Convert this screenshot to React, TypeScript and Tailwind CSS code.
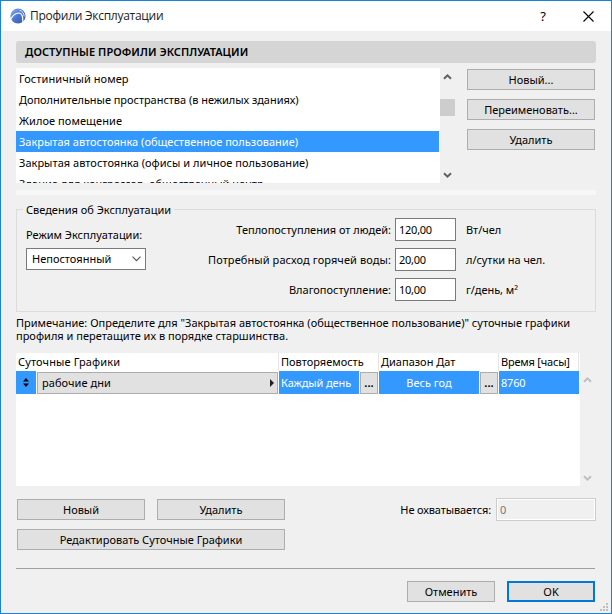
import React, { useState } from 'react';
import clsx from 'clsx';

const profiles = [
  { name: 'Гостиничный номер', spacing: 'tracking-[0.07px]' },
  { name: 'Дополнительные пространства (в нежилых зданиях)', spacing: 'tracking-[-0.04px]' },
  { name: 'Жилое помещение', spacing: 'tracking-[0.07px]' },
  { name: 'Закрытая автостоянка (общественное пользование)', spacing: 'tracking-normal' },
  { name: 'Закрытая автостоянка (офисы и личное пользование)', spacing: 'tracking-[0.03px]' },
  { name: 'Здание для конгрессов, общественный центр', spacing: 'tracking-normal' },
];

const gains = [
  { label: 'Теплопоступления от людей:', spacing: 'tracking-normal', value: '120,00', unit: 'Вт/чел' },
  { label: 'Потребный расход горячей воды:', spacing: 'tracking-[0.09px]', value: '20,00', unit: 'л/сутки на чел.' },
  { label: 'Влагопоступление:', spacing: 'tracking-normal', value: '10,00', unit: 'г/день, м²' },
];

const Button = ({ className, children }: { className?: string; children: React.ReactNode }) => (
  <button
    type="button"
    className={clsx(
      'flex h-[21px] shrink-0 items-center justify-center border bg-[#e1e1e1] whitespace-nowrap',
      className ?? 'w-32 border-[#adadad]',
    )}
  >
    {children}
  </button>
);

const Arrow = ({ down = false, color }: { down?: boolean; color: string }) => (
  <svg width="9" height="7" viewBox="0 0 9 7" fill="none" stroke={color} strokeWidth="2">
    <path d={down ? 'M1 1.2 4.5 4.7 8 1.2' : 'M1 5.8 4.5 2.3 8 5.8'} />
  </svg>
);

const Logo = () => (
  <svg width="16" height="16" viewBox="0 0 16 16">
    <defs>
      <linearGradient id="logo" x1="0" y1="0" x2="1" y2="1">
        <stop offset="0" stopColor="#8db2f2" />
        <stop offset="0.5" stopColor="#4a76d0" />
        <stop offset="1" stopColor="#3456ac" />
      </linearGradient>
    </defs>
    <circle cx="8" cy="8" r="7.6" fill="url(#logo)" />
    <path d="M.2 12C2.6 7.4 5 5 8.6 5 12.3 5 13 9 12.8 14.8" fill="none" stroke="#fff" strokeWidth="1.2" />
    <path d="M9.5 2.3C12.6 3 14 5.4 14.1 8.5" fill="none" stroke="#e8effc" strokeWidth="1" />
  </svg>
);

const TitleBar = () => (
  <div className="flex h-[30px] shrink-0 items-center bg-white pl-[9px] text-[#222]">
    <Logo />
    <span className="ml-[4px] font-['Open_Sans','Noto_Sans',sans-serif] text-[12px] tracking-[-0.27px]">
      Профили Эксплуатации
    </span>
    <span className="ml-auto w-2 text-center text-[13px] text-black">?</span>
    <svg className="mr-[17px] ml-[36px]" width="11" height="11" viewBox="0 0 11 11" stroke="#000" strokeWidth="1.1">
      <path d="M.5.5l10 10M10.5.5l-10 10" />
    </svg>
  </div>
);

export default function App() {
  const [selected, setSelected] = useState(3);

  return (
    <div className="flex h-[614px] w-[612px] flex-col overflow-hidden border border-[#1883d7] bg-[#f0f0f0] font-['Noto_Sans',sans-serif] text-[11px] leading-4 text-black">
      <TitleBar />

      <div className="relative flex grow flex-col px-[15px] pt-[10px]">
        <div className="flex h-[22px] shrink-0 items-center rounded-[3px] bg-[#d5d5d5] pl-[9px] font-semibold tracking-[0.05px]">
          ДОСТУПНЫЕ ПРОФИЛИ ЭКСПЛУАТАЦИИ
        </div>

        {/* Profiles */}
        <div className="mt-[5px] flex h-[115px] shrink-0">
          <div className="w-[424px] overflow-hidden bg-white pr-px">
            {profiles.map((profile, index) => (
              <div
                key={profile.name}
                onClick={() => setSelected(index)}
                className={clsx(
                  'flex h-[21px] items-center pt-px pl-[3px] whitespace-nowrap',
                  index === selected && 'bg-[#3399ff] text-white',
                )}
              >
                <span className={profile.spacing}>{profile.name}</span>
              </div>
            ))}
          </div>
          <div className="flex w-[15px] flex-col items-center pt-[5px] pb-[4px]">
            <Arrow color="#606060" />
            <div className="mt-[19px] h-[17px] w-[15px] shrink-0 bg-[#cdcdcd]" />
            <div className="mt-auto">
              <Arrow down color="#606060" />
            </div>
          </div>
          <div className="ml-[12px] flex flex-col gap-[9px] pt-px">
            <Button>Новый...</Button>
            <Button>Переименовать...</Button>
            <Button>Удалить</Button>
          </div>
        </div>

        <div className="mt-[7px] h-[5px] shrink-0 bg-[#f7f7f7]" />

        {/* Details */}
        <div className="mt-[14px] flex h-[103px] shrink-0 border border-[#dcdcdc]">
          <div className="w-[185px] pl-[6px]">
            <div className="-mt-[8px] w-fit bg-[#f0f0f0] px-[3px] whitespace-nowrap">Сведения об Эксплуатации</div>
            <div className="mt-[9px] pl-[3px] whitespace-nowrap">Режим Эксплуатации:</div>
            <div className="mt-[5px] ml-[3px] flex h-[22px] w-[120px] items-center justify-between border border-[#7a7a7a] bg-white pr-[4px] pl-[5px]">
              <span>Непостоянный</span>
              <svg width="9" height="6" viewBox="0 0 9 6" fill="none" stroke="#555" strokeWidth="1.1">
                <path d="M.5.7l4 4 4-4" />
              </svg>
            </div>
          </div>
          <div className="flex flex-col gap-[7px] pt-[8px]">
            {gains.map((gain) => (
              <div key={gain.label} className="flex h-[23px] items-center whitespace-nowrap">
                <span className={clsx('w-[189px] text-right', gain.spacing)}>{gain.label}</span>
                <div className="ml-[4px] flex h-[23px] w-[61px] items-center border border-[#7a7a7a] bg-white pl-[3px] tracking-[-0.25px]">
                  {gain.value}
                </div>
                <span className="ml-[10px] tracking-[-0.05px]">{gain.unit}</span>
              </div>
            ))}
          </div>
        </div>

        <p className="mt-[4px] shrink-0 leading-[13px] tracking-[0.01px] whitespace-nowrap">
          Примечание: Определите для "Закрытая автостоянка (общественное пользование)" суточные графики
          <br />
          профиля и перетащите их в порядке старшинства.
        </p>

        {/* Daily schedules */}
        <div className="mt-[11px] flex h-[133px] shrink-0">
          <div className="w-[564px] bg-white">
            <div className="flex h-[18px] items-center whitespace-nowrap">
              <div className="h-full w-[263px] border-r border-[#e5e5e5] pt-px pl-[2px] tracking-[0.12px]">
                Суточные Графики
              </div>
              <div className="h-full w-[100px] border-r border-[#e5e5e5] pt-px pl-[2px]">Повторяемость</div>
              <div className="h-full w-[120px] border-r border-[#e5e5e5] pt-px pl-[2px]">Диапазон Дат</div>
              <div className="h-full w-[80px] border-r border-[#e5e5e5] pt-px pl-[2px] tracking-[-0.2px]">
                Время [часы]
              </div>
            </div>
            <div className="flex h-[23px] items-center text-white">
              <div className="flex h-full w-5 items-center justify-center bg-[#3399ff]">
                <svg width="6" height="9" viewBox="0 0 6 9" fill="#000">
                  <path d="M3 0l3 3.5H0zM3 9L0 5.5h6z" />
                </svg>
              </div>
              <div className="ml-px flex h-[22px] w-[241px] items-center justify-between border border-[#adadad] bg-[#e1e1e1] pr-[3px] pl-[4px] text-black">
                <span className="tracking-[0.05px]">рабочие дни</span>
                <svg width="4" height="8" viewBox="0 0 4 8" fill="#222">
                  <path d="M0 0l4 4-4 4z" />
                </svg>
              </div>
              <div className="ml-px flex h-full w-[80px] items-center bg-[#3399ff] pt-px pl-[2px] tracking-[-0.1px] whitespace-nowrap">
                Каждый день
              </div>
              <div className="ml-px flex h-[22px] w-[18px] items-center justify-center border border-[#adadad] bg-[#e1e1e1] font-bold text-black">
                ...
              </div>
              <div className="ml-px flex h-full w-[100px] items-center justify-center bg-[#3399ff] pt-px">Весь год</div>
              <div className="ml-px flex h-[22px] w-[18px] items-center justify-center border border-[#adadad] bg-[#e1e1e1] font-bold text-black">
                ...
              </div>
              <div className="ml-px flex h-full w-[80px] items-center bg-[#3399ff] pt-px pl-[2px] tracking-[-0.2px]">8760</div>
            </div>
          </div>
          <div className="flex w-[15px] flex-col items-center justify-between pt-[23px] pb-[4px]">
            <Arrow color="#bfbfbf" />
            <Arrow down color="#bfbfbf" />
          </div>
        </div>

        <div className="mt-[12px] flex h-[52px] shrink-0 justify-between pl-px">
          <div className="mt-px flex flex-col gap-[9px]">
            <div className="flex gap-3">
              <Button>Новый</Button>
              <Button>Удалить</Button>
            </div>
            <Button className="w-[268px] border-[#adadad]">Редактировать Суточные Графики</Button>
          </div>
          <div className="flex h-[23px] items-center">
            <span className="tracking-[-0.12px]">Не охватывается:</span>
            <div className="ml-[5px] flex h-[23px] w-[100px] items-center border border-[#cccccc] bg-[#f0f0f0] pl-[3px] text-[#777] inset-ring inset-ring-white">
              0
            </div>
          </div>
        </div>

        <div className="mt-[18px] mr-px h-px shrink-0 bg-[#a0a0a0]" />

        <div className="mt-[12px] mr-px flex justify-end gap-3">
          <Button className="w-[88px] border-[#adadad]">Отменить</Button>
          <Button className="w-[88px] border-2 border-[#0078d7]">OK</Button>
        </div>

        <svg className="absolute right-[3px] bottom-[2px]" width="8" height="8" viewBox="0 0 8 8" fill="#bfbfbf">
          <path d="M6 0h2v2H6zM3 3h2v2H3zM6 3h2v2H6zM0 6h2v2H0zM3 6h2v2H3zM6 6h2v2H6z" />
        </svg>
      </div>
    </div>
  );
}
